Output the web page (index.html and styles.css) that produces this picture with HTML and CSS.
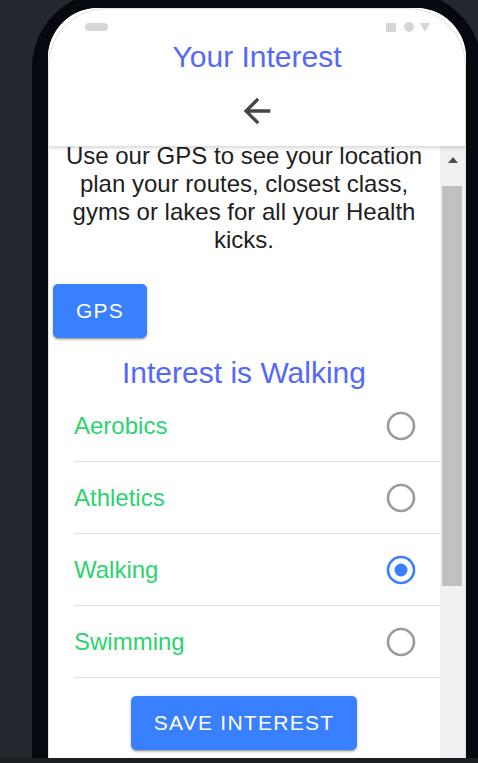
FILE: index.html
```html
<!DOCTYPE html>
<html lang="en">
<head>
<meta charset="utf-8">
<title>Your Interest</title>
<link rel="stylesheet" href="styles.css">
</head>
<body>
<div class="stage">
  <div class="frame">
    <div class="screen">
      <header class="header">
        <div class="status">
          <span class="pill"></span>
          <div class="sys">
            <span class="sq"></span>
            <span class="dot"></span>
            <span class="tri"></span>
          </div>
        </div>
        <h1 class="title">Your Interest</h1>
        <div class="toolbar">
          <button class="back" aria-label="Back">
            <svg viewBox="0 0 24 24" width="40" height="40"><path d="M20 11H7.83l5.59-5.59L12 4l-8 8 8 8 1.41-1.41L7.83 13H20v-2z"/></svg>
          </button>
        </div>
      </header>
      <div class="body">
        <div class="content">
          <p class="intro">Use our GPS to see your location plan your routes, closest class, gyms or lakes for all your Health kicks.</p>
          <button class="btn btn-gps">GPS</button>
          <h2 class="section-title">Interest is Walking</h2>
          <div class="list">
            <div class="item"><div class="item-inner"><span class="label">Aerobics</span>
              <svg class="radio" viewBox="0 0 30 30" width="30" height="30"><circle cx="15" cy="15" r="13" class="ring"/></svg></div></div>
            <div class="item"><div class="item-inner"><span class="label">Athletics</span>
              <svg class="radio" viewBox="0 0 30 30" width="30" height="30"><circle cx="15" cy="15" r="13" class="ring"/></svg></div></div>
            <div class="item"><div class="item-inner"><span class="label">Walking</span>
              <svg class="radio checked" viewBox="0 0 30 30" width="30" height="30"><circle cx="15" cy="15" r="13" class="ring"/><circle cx="15" cy="15" r="6.5" class="mark"/></svg></div></div>
            <div class="item"><div class="item-inner"><span class="label">Swimming</span>
              <svg class="radio" viewBox="0 0 30 30" width="30" height="30"><circle cx="15" cy="15" r="13" class="ring"/></svg></div></div>
          </div>
          <div class="save-wrap"><button class="btn btn-save">SAVE INTEREST</button></div>
        </div>
        <div class="scrollbar">
          <div class="sb-up"><span class="sb-arrow"></span></div>
          <div class="sb-thumb"></div>
        </div>
      </div>
    </div>
  </div>
</div>
<div class="strip"></div>
</body>
</html>
```

FILE: styles.css
```css
* { box-sizing: border-box; }
html, body { margin: 0; padding: 0; }
body {
  background: #23272e;
  font-family: "Liberation Sans", Arial, sans-serif;
  width: 478px;
  height: 763px;
  overflow: hidden;
}
.stage {
  height: 758px;
  overflow: hidden;
  padding-left: 32px;
}
.strip {
  height: 5px;
  background: #1b1e23;
}
.frame {
  width: 450px;
  margin-top: -8px;
  padding: 16px 16px 0 16px;
  background: #05080f;
  border-radius: 76px 76px 0 0;
}
.screen {
  position: relative;
  width: 418px;
  height: 800px;
  background: #fff;
  border-radius: 50px 50px 0 0;
  overflow: hidden;
  display: flex;
  flex-direction: column;
}
.screen::after {
  content: "";
  position: absolute;
  inset: 0;
  border: 1px solid #e0e0e0;
  border-radius: 58px 58px 0 0;
  pointer-events: none;
  z-index: 5;
}
.header {
  position: relative;
  z-index: 2;
  background: #fff;
  box-shadow: 0 2px 4px rgba(0, 0, 0, 0.16);
  flex: none;
}
.status {
  height: 31px;
  padding: 14px 36px 0 37px;
  display: flex;
  justify-content: space-between;
  align-items: flex-start;
}
.pill {
  width: 23px;
  height: 8px;
  margin-top: 1px;
  border-radius: 4px;
  background: #d6d6d6;
}
.sys {
  display: flex;
  align-items: center;
  gap: 8px;
}
.sq {
  width: 10px;
  height: 9px;
  background: #d6d6d6;
  border-radius: 1px;
}
.dot {
  width: 10px;
  height: 10px;
  border-radius: 50%;
  background: #d6d6d6;
}
.tri {
  width: 0;
  height: 0;
  margin-left: -2px;
  border-left: 5.5px solid transparent;
  border-right: 5.5px solid transparent;
  border-top: 9px solid #d6d6d6;
}
.title {
  margin: 0;
  font-size: 30px;
  line-height: 36px;
  font-weight: normal;
  text-align: center;
  color: #5468fa;
}
.toolbar {
  height: 71px;
  display: flex;
  align-items: center;
  justify-content: center;
}
.back {
  border: none;
  background: none;
  padding: 0;
  width: 40px;
  height: 40px;
  display: flex;
}
.back svg { fill: #454545; }
.body {
  flex: 1;
  display: flex;
  min-height: 0;
}
.content {
  flex: 1;
  overflow: hidden;
}
.intro {
  margin: -4px 0 0 0;
  padding: 0 8px;
  font-size: 24px;
  line-height: 28px;
  text-align: center;
  color: #1e1e1e;
}
.btn {
  border: none;
  font-family: inherit;
  font-size: 21px;
  letter-spacing: 0.06em;
  color: #fff;
  background: #3880ff;
  height: 54px;
  padding: 0 23px;
  border-radius: 5px;
  box-shadow: 0 3px 1px -2px rgba(0,0,0,.2), 0 2px 2px 0 rgba(0,0,0,.14), 0 1px 5px 0 rgba(0,0,0,.12);
}
.btn-gps {
  display: block;
  margin: 30px 0 0 5px;
}
.section-title {
  margin: 18px 0 0 0;
  font-size: 30px;
  line-height: 34px;
  font-weight: normal;
  text-align: center;
  color: #5468fa;
}
.list { margin: 0; }
.item { padding-left: 26px; }
.item-inner {
  height: 72px;
  border-bottom: 1.5px solid #dedede;
  display: flex;
  align-items: center;
  justify-content: space-between;
  padding-right: 25px;
}
.label {
  font-size: 24px;
  color: #2dd36f;
}
.radio { display: block; margin-right: -1px; }
.radio .ring { fill: none; stroke: #9b9b9b; stroke-width: 2.6; }
.radio.checked .ring { stroke: #3880ff; }
.radio .mark { fill: #3880ff; }
.save-wrap {
  display: flex;
  justify-content: center;
  padding-top: 18px;
}
.scrollbar {
  width: 26px;
  flex: none;
  background: #f1f1f1;
  display: flex;
  flex-direction: column;
}
.sb-up {
  height: 27px;
  display: flex;
  align-items: center;
  justify-content: center;
}
.sb-arrow {
  width: 0;
  height: 0;
  border-left: 5.5px solid transparent;
  border-right: 5.5px solid transparent;
  border-bottom: 6px solid #505050;
  margin-right: 1px;
}
.sb-thumb {
  margin: 13px 4px 0 2px;
  height: 400px;
  background: #c1c1c1;
}
```
